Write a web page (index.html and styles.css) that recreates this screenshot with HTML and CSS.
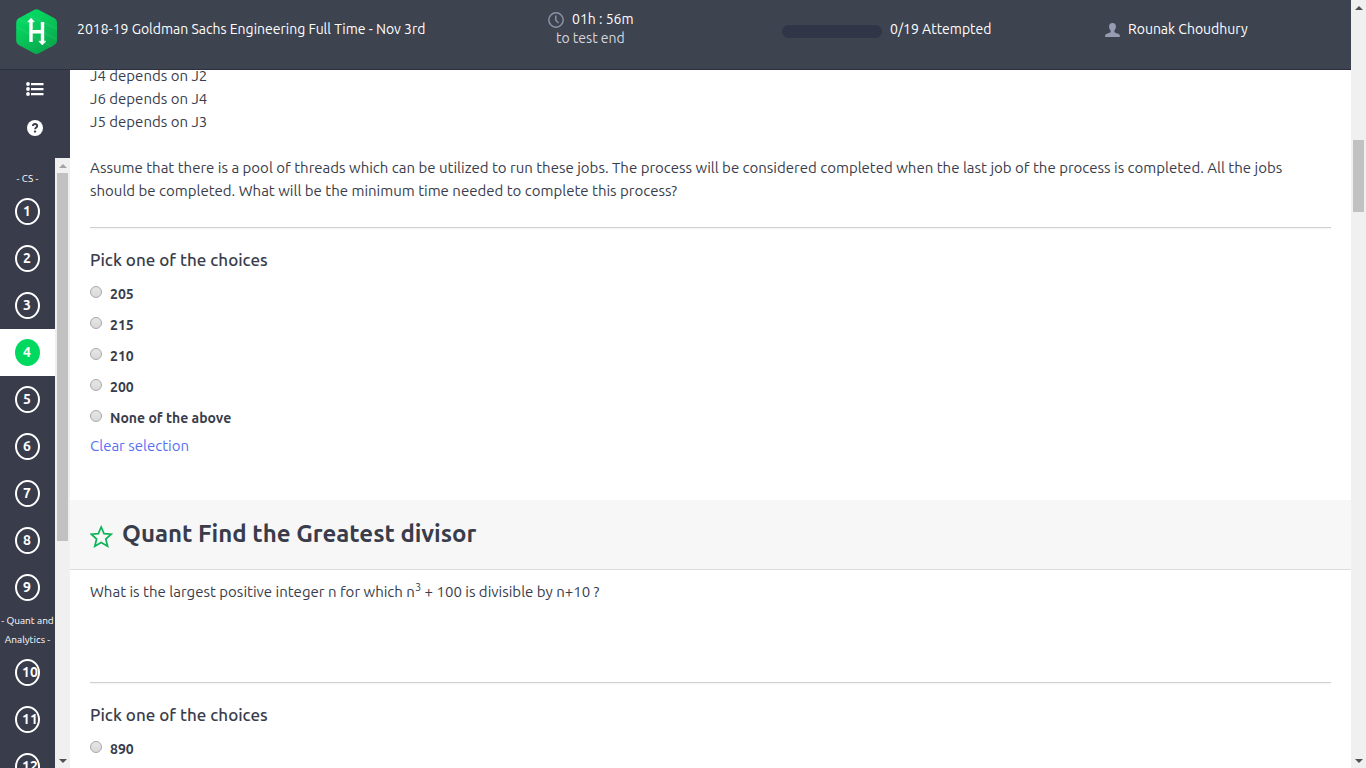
FILE: index.html
```html
<!DOCTYPE html>
<html lang="en">
<head>
<meta charset="utf-8">
<title>2018-19 Goldman Sachs Engineering Full Time - Nov 3rd</title>
<link rel="stylesheet" href="styles.css">
</head>
<body>
<div class="window">
  <div class="app">
    <header class="topbar">
      <a class="logo" href="#" aria-label="HackerRank">
        <svg viewBox="0 0 42 46" width="42" height="46">
          <defs>
            <linearGradient id="hex" x1="0" y1="0" x2="0.6" y2="1">
              <stop offset="0" stop-color="#00e468"/>
              <stop offset="0.5" stop-color="#08c95b"/>
              <stop offset="1" stop-color="#09a84c"/>
            </linearGradient>
          </defs>
          <path d="M18 1Q20.500 -.4 23 1L38.500 9.300Q41 10.800 41 13.500V31.500Q41 34.500 38.500 36L23 44.300Q20.500 45.600 18 44.300L2.700 36Q.2 34.500 .2 31.500V13.500Q.2 10.800 2.700 9.300Z" fill="url(#hex)"/>
          <path d="M2 10L40 30M1 18L36 38M10 5L41 20" stroke="#fff" stroke-opacity=".06" stroke-width="2"/>
          <path d="M15 12V33M26.500 13V33M15 22.800H26.500" fill="none" stroke="#fff" stroke-width="3.400"/>
          <path d="M11.600 12.800L15 9.200L18.400 12.800ZM22.800 32.200L26.300 36L29.800 32.200Z" fill="#fff" stroke="#fff" stroke-width=".6" stroke-linejoin="round"/>
        </svg>
      </a>
      <div class="test-name">2018-19 Goldman Sachs Engineering Full Time - Nov 3rd</div>
      <div class="timer">
        <div class="timer-row">
          <svg viewBox="0 0 16 16" width="16" height="16" fill="none" stroke="#8d92a8" stroke-width="1.500"><circle cx="8" cy="8" r="7.200"/><path d="M7.800 3.500V8.300L10.500 11"/></svg>
          <span>01h : 56m</span>
        </div>
        <div class="timer-note">to test end</div>
      </div>
      <div class="progress">
        <div class="track" role="progressbar" aria-label="Attempted" aria-valuemin="0" aria-valuemax="19" aria-valuenow="0"></div>
        <span>0/19 Attempted</span>
      </div>
      <div class="user">
        <svg viewBox="0 0 15 14" width="15" height="14" fill="#979cb2"><path d="M7.500 0C9.900 0 11 1.500 10.900 3.800C11 5 10.500 6.300 9.400 7.500V9.200C10.500 10.200 14.200 10.300 14.700 12.200L15 14H0L.3 12.200C.8 10.300 4.500 10.200 5.600 9.200V7.500C4.500 6.300 4 5 4.100 3.800C4 1.500 5.100 0 7.500 0Z"/></svg>
        <span>Rounak Choudhury</span>
      </div>
    </header>

    <div class="body">
      <nav class="sidebar" aria-label="Questions">
        <div class="tools">
          <button class="tool" aria-label="All questions">
            <svg viewBox="0 0 18 14" width="18" height="14" fill="#fff"><circle cx="2" cy="2" r="1.900"/><circle cx="2" cy="7" r="1.900"/><circle cx="2" cy="12" r="1.900"/><path d="M5 1H17.500V3.200H5ZM5 6H17.500V8.200H5ZM5 11H17.500V13.200H5Z"/></svg>
          </button>
          <button class="tool" aria-label="Help">
            <svg viewBox="0 0 16 16" width="16" height="16"><circle cx="8" cy="8" r="8" fill="#fff"/><path d="M5.900 6Q6 4 8 4T10.200 5.900C10.200 7.500 8.100 7.300 8.100 9.300" fill="none" stroke="#393d4b" stroke-width="1.900"/><path d="M7 10.600H9.100V12.500H7Z" fill="#393d4b"/></svg>
          </button>
        </div>
        <div class="question-panel">
          <div class="question-list">
            <div class="section">- CS -</div>
            <a class="question" href="#"><span class="num">1</span></a>
            <a class="question" href="#"><span class="num">2</span></a>
            <a class="question" href="#"><span class="num">3</span></a>
            <a class="question current" href="#" aria-current="page"><span class="num">4</span></a>
            <a class="question" href="#"><span class="num">5</span></a>
            <a class="question" href="#"><span class="num">6</span></a>
            <a class="question" href="#"><span class="num">7</span></a>
            <a class="question" href="#"><span class="num">8</span></a>
            <a class="question" href="#"><span class="num">9</span></a>
            <div class="section">- Quant and<br>Analytics -</div>
            <a class="question" href="#"><span class="num">10</span></a>
            <a class="question" href="#"><span class="num">11</span></a>
            <a class="question" href="#"><span class="num">12</span></a>
          </div>
          <div class="scrollbar list-scroll" aria-hidden="true">
            <span class="arrow up dim"></span>
            <div class="rail"><div class="thumb"></div></div>
            <span class="arrow down"></span>
          </div>
        </div>
      </nav>

      <main class="content">
        <section class="problem scrolled">
          <p>J4 depends on J2<br>J6 depends on J4<br>J5 depends on J3</p>
          <p class="wide">Assume that there is a pool of threads which can be utilized to run these jobs. The process will be considered completed when the last job of the process is completed. All the jobs should be completed. What will be the minimum time needed to complete this process?</p>
          <hr>
          <fieldset class="choices">
            <legend>Pick one of the choices</legend>
            <label><input type="radio" name="q4"><span>205</span></label>
            <label><input type="radio" name="q4"><span>215</span></label>
            <label><input type="radio" name="q4"><span>210</span></label>
            <label><input type="radio" name="q4"><span>200</span></label>
            <label><input type="radio" name="q4"><span>None of the above</span></label>
          </fieldset>
          <a class="clear" href="#">Clear selection</a>
        </section>

        <header class="problem-head">
          <svg viewBox="0 0 24 24" width="24" height="24" fill="none" stroke="#0cb457" stroke-width="1.700"><path d="M11.200 2L14 8.600L21.200 9.200L15.800 14L17.600 21.200L11.200 17.500L4.800 21.200L6.600 14L1.300 9.200L8.400 8.600Z"/></svg>
          <h1>Quant Find the Greatest divisor</h1>
        </header>
        <section class="problem next">
          <p>What is the largest positive integer n for which n<sup>3</sup> + 100 is divisible by n+10 ?</p>
          <hr>
          <fieldset class="choices">
            <legend>Pick one of the choices</legend>
            <label><input type="radio" name="q5"><span>890</span></label>
          </fieldset>
        </section>
      </main>
    </div>
  </div>
  <div class="scrollbar page-scroll" aria-hidden="true">
    <span class="arrow up"></span>
    <div class="rail"><div class="thumb"></div></div>
    <span class="arrow down"></span>
  </div>
</div>
</body>
</html>
```
FILE: styles.css
```css
* { box-sizing: border-box; }

body {
  margin: 0;
  font-family: Ubuntu, "Noto Sans", "Open Sans", sans-serif;
  font-size: 15px;
  line-height: 23px;
  color: #393d4b;
}

a { text-decoration: none; }
svg { display: block; flex: none; }

.window { display: flex; height: 100vh; overflow: hidden; }
.app { flex: 1; min-width: 0; display: flex; flex-direction: column; }

/* Top bar */
.topbar {
  flex: none;
  display: grid;
  grid-template-columns: 77px 471fr 234fr 323fr 246fr;
  height: 70px;
  background: #3e4350;
  border-bottom: 1px solid #2c303e;
  color: #fff;
  font-size: 14px;
  line-height: 19px;
}
.logo { padding: 9px 0 0 16px; }
.test-name { padding-top: 20px; white-space: nowrap; }
.timer { padding-top: 10px; }
.timer-row { display: flex; align-items: center; gap: 8px; }
.timer-note { padding-left: 8px; color: #d5d7dc; }
.progress { display: flex; gap: 8px; padding-top: 20px; }
.track { width: 100px; height: 13px; margin-top: 5px; border-radius: 7px; background: #303547; }
.user { display: flex; gap: 8px; padding-top: 20px; }
.user svg { margin-top: 3px; }

.body { flex: 1; min-height: 0; display: flex; }

/* Sidebar */
.sidebar { flex: none; width: 70px; display: flex; flex-direction: column; background: #393d4b; }
.tools { display: flex; flex-direction: column; height: 88px; }
.tool {
  display: flex;
  align-items: center;
  justify-content: center;
  height: 39px;
  padding: 0 0 2px;
  border: 0;
  background: none;
}
.question-panel { flex: 1; min-height: 0; display: flex; }
.question-list { flex: 1; overflow: hidden; padding-top: 11px; }
.section { color: #fff; font-size: 10px; line-height: 19px; text-align: center; white-space: nowrap; }
.question { display: block; padding: 10px 15px; color: #fff; }
.num {
  display: block;
  width: 25px;
  height: 27px;
  padding: 0 6px 0 5px;
  border: 2px solid #fff;
  border-radius: 50%;
  font-size: 14px;
  font-weight: 700;
  line-height: 23px;
  text-align: center;
}
.current { background: #fff; }
.current .num { background: #00d95f; border-color: #00d95f; color: #fff; }

/* Scrollbars */
.scrollbar { flex: none; width: 15px; display: flex; flex-direction: column; background: #f0f0f0; }
.rail { flex: 1; display: flex; flex-direction: column; padding: 0 2px; }
.thumb { background: #c1c1c1; }
.arrow { height: 15px; display: flex; align-items: center; justify-content: center; }
.arrow::before { content: ""; border: 4px solid transparent; }
.up::before { border-top-width: 0; border-bottom-color: #505050; }
.down::before { border-bottom-width: 0; border-top-color: #505050; }
.dim::before { border-bottom-color: #a3a3a3; }
.list-scroll .thumb { height: 63.5%; }
.page-scroll .rail { padding-top: 125px; }
.page-scroll .thumb { height: 72px; }

/* Content */
.content { flex: 1; min-width: 0; overflow: hidden; background: #fff; }
.problem { padding: 0 20px; }
.scrolled { margin-top: -6px; padding-bottom: 43px; }
.problem p { margin: 0 0 23px; }
.problem .wide { margin-bottom: 25px; padding-right: 20px; }
hr { height: 1px; margin: 0; border: 0; background: #cfcfcf; box-shadow: 0 1px 2px #eee; }

.choices { margin: 0; padding: 0; border: 0; }
.choices legend { padding: 20px 0 8px; font-size: 17px; font-weight: 500; line-height: 23px; }
.choices label { display: flex; gap: 8px; height: 31px; font-size: 14px; font-weight: 700; line-height: 30px; }
.choices input {
  appearance: none;
  flex: none;
  width: 12px;
  height: 12px;
  margin: 7px 0 0;
  border: 1px solid #a9a9a9;
  border-radius: 50%;
  background: linear-gradient(#e6e6e6, #d9d9d9);
}
.clear { display: block; width: max-content; color: #576ff2; }

.problem-head {
  display: flex;
  gap: 8px;
  height: 70px;
  padding: 22px 20px 0;
  background: #f7f7f7;
  border-bottom: 1px solid #dcdcdc;
}
.problem-head svg { margin-top: 3px; }
.problem-head h1 { margin: 0; font-size: 24px; font-weight: 700; line-height: 24px; }
.next { padding-top: 10px; }
.problem.next p { margin-bottom: 79px; }
sup { font-size: 11px; line-height: 0; }
```
